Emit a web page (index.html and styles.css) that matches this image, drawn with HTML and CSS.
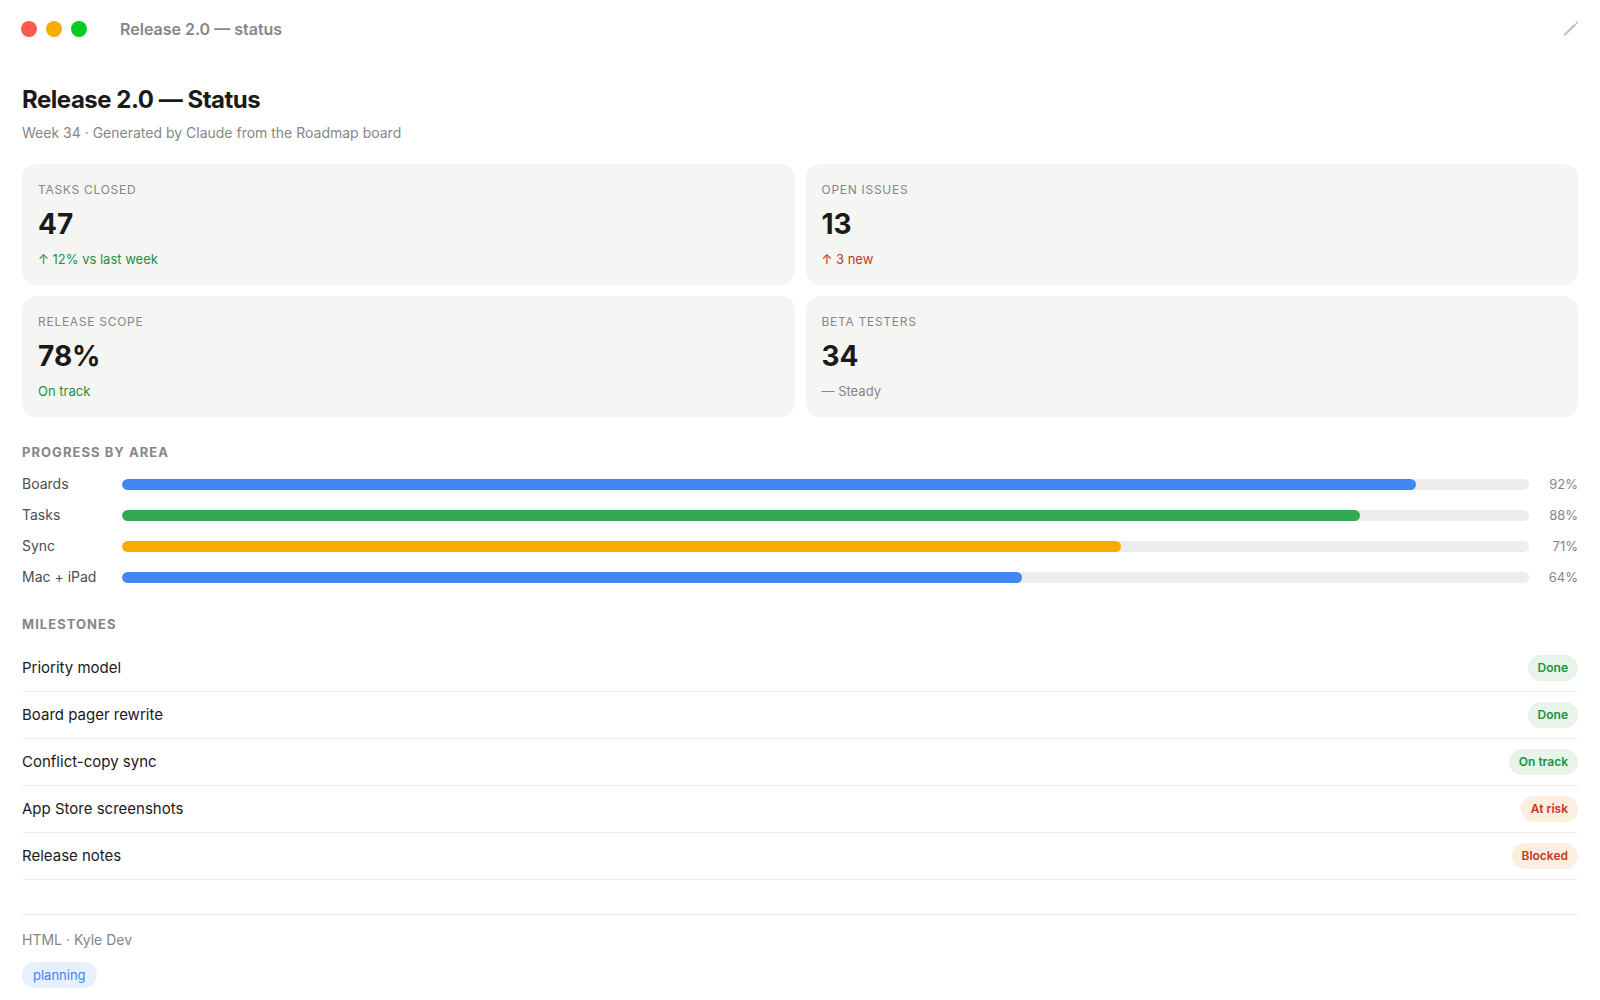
FILE: index.html
```html
<!DOCTYPE html>
<html lang="en">
<head>
<meta charset="utf-8">
<meta name="viewport" content="width=device-width, initial-scale=1">
<title>Release 2.0 — status</title>
<link rel="stylesheet" href="styles.css">
</head>
<body>
<header class="titlebar">
  <div class="lights">
    <button class="light light-close" type="button" aria-label="Close"></button>
    <button class="light light-min" type="button" aria-label="Minimize"></button>
    <button class="light light-zoom" type="button" aria-label="Zoom"></button>
  </div>
  <span class="window-title">Release 2.0 — status</span>
  <button class="edit" type="button" aria-label="Edit">
    <svg width="16" height="16" viewBox="0 0 16 16" fill="#bdbdbd"><path d="M11.700 2.300l1.600 1.600L2.600 14.300l-2.200.8.800-2.200z"/><path d="M12.500 1.500l.7-.7q.6-.5 1.200 0l.5.5q.5.6 0 1.200l-.7.7z"/></svg>
  </button>
</header>
<main class="page">
  <h1 class="heading">Release 2.0 — Status</h1>
  <p class="subtitle">Week 34 · Generated by Claude from the Roadmap board</p>

  <section class="cards">
    <article class="card">
      <div class="card-label">TASKS CLOSED</div>
      <div class="card-value">47</div>
      <div class="card-note good">↑ 12% vs last week</div>
    </article>
    <article class="card">
      <div class="card-label">OPEN ISSUES</div>
      <div class="card-value">13</div>
      <div class="card-note bad">↑ 3 new</div>
    </article>
    <article class="card">
      <div class="card-label">RELEASE SCOPE</div>
      <div class="card-value">78%</div>
      <div class="card-note good">On track</div>
    </article>
    <article class="card">
      <div class="card-label">BETA TESTERS</div>
      <div class="card-value">34</div>
      <div class="card-note">— Steady</div>
    </article>
  </section>

  <h2 class="section-title">PROGRESS BY AREA</h2>
  <div class="areas">
    <div class="area"><span class="area-name">Boards</span><div class="track"><div class="fill blue" style="width:92%"></div></div><span class="area-pct">92%</span></div>
    <div class="area"><span class="area-name">Tasks</span><div class="track"><div class="fill green" style="width:88%"></div></div><span class="area-pct">88%</span></div>
    <div class="area"><span class="area-name">Sync</span><div class="track"><div class="fill amber" style="width:71%"></div></div><span class="area-pct">71%</span></div>
    <div class="area"><span class="area-name">Mac + iPad</span><div class="track"><div class="fill blue" style="width:64%"></div></div><span class="area-pct">64%</span></div>
  </div>

  <h2 class="section-title">MILESTONES</h2>
  <ul class="milestones">
    <li class="milestone"><span>Priority model</span><span class="pill pill-good">Done</span></li>
    <li class="milestone"><span>Board pager rewrite</span><span class="pill pill-good">Done</span></li>
    <li class="milestone"><span>Conflict-copy sync</span><span class="pill pill-good">On track</span></li>
    <li class="milestone"><span>App Store screenshots</span><span class="pill pill-bad">At risk</span></li>
    <li class="milestone"><span>Release notes</span><span class="pill pill-bad">Blocked</span></li>
  </ul>
</main>
<footer class="footer">
  <div class="meta">HTML · Kyle Dev</div>
  <span class="tag">planning</span>
</footer>
</body>
</html>
```
FILE: styles.css
```css
* { box-sizing: border-box; }

body {
  margin: 0;
  background: #fff;
  color: #1a1a1a;
  font-family: Inter, "Liberation Sans", sans-serif;
  font-size: 15px;
  line-height: 20px;
}

h1, h2, p, ul { margin: 0; padding: 0; }

button { padding: 0; border: 0; background: none; }

.titlebar {
  display: flex;
  align-items: center;
  height: 58px;
  padding: 0 21px;
}

.lights { display: flex; gap: 9px; }
.light { width: 16px; height: 16px; border-radius: 50%; }
.light-close { background: #ff5a52; }
.light-min { background: #fbab00; }
.light-zoom { background: #04cc22; }

.window-title {
  margin-left: 33px;
  color: #868686;
  font-size: 16px;
  font-weight: 600;
}

.edit { display: flex; margin-left: auto; }

.page { padding: 27px 22px 0; }

.heading {
  font-size: 24px;
  font-weight: 700;
  line-height: 30px;
  letter-spacing: -0.02em;
}

.subtitle {
  margin-top: 8px;
  color: #868686;
  font-size: 14px;
}

.cards {
  display: grid;
  grid-template-columns: 1fr 1fr;
  gap: 11px;
  margin-top: 21px;
}

.card {
  padding: 16px;
  border-radius: 14px;
  background: #f5f5f3;
}

.card-label {
  color: #868686;
  font-size: 12px;
  letter-spacing: 0.06em;
}

.card-value {
  margin-top: 6px;
  font-size: 28px;
  font-weight: 700;
  line-height: 36px;
}

.card-note {
  margin-top: 7px;
  color: #868686;
  font-size: 13px;
}

.card-note.good { color: #1e9040; }
.card-note.bad { color: #c5361c; }

.section-title {
  margin-top: 25px;
  color: #868686;
  font-size: 13px;
  font-weight: 700;
  letter-spacing: 0.08em;
}

.areas {
  display: flex;
  flex-direction: column;
  gap: 11px;
  margin-top: 12px;
}

.area { display: flex; align-items: center; }
.area-name { width: 100px; color: #4d4d4d; font-size: 14px; }
.track {
  flex: 1;
  height: 11px;
  overflow: hidden;
  border-radius: 6px;
  background: #ededed;
}
.fill { height: 100%; border-radius: 6px; }
.blue { background: #4285f4; }
.green { background: #34a853; }
.amber { background: #f9ab00; }
.area-pct {
  width: 49px;
  color: #868686;
  font-size: 13px;
  text-align: right;
}

.areas + .section-title { margin-top: 27px; }

.milestones { margin-top: 11px; list-style: none; }

.milestone {
  display: flex;
  align-items: center;
  justify-content: space-between;
  padding: 10px 0;
  border-bottom: 1px solid #ececec;
}

.pill {
  padding: 3px 10px;
  border-radius: 13px;
  font-size: 12px;
  font-weight: 600;
}
.pill-good { background: #e6f4ea; color: #1e9040; }
.pill-bad { background: #feeee0; color: #c5361c; }

.footer {
  margin: 34px 22px 0;
  padding: 15px 0 13px;
  border-top: 1px solid #e8e8e8;
}

.meta { color: #868686; font-size: 14px; }

.tag {
  display: inline-block;
  margin-top: 12px;
  padding: 3px 11px;
  border-radius: 13px;
  background: #e8f0fe;
  color: #4285f4;
  font-size: 13px;
}
```
